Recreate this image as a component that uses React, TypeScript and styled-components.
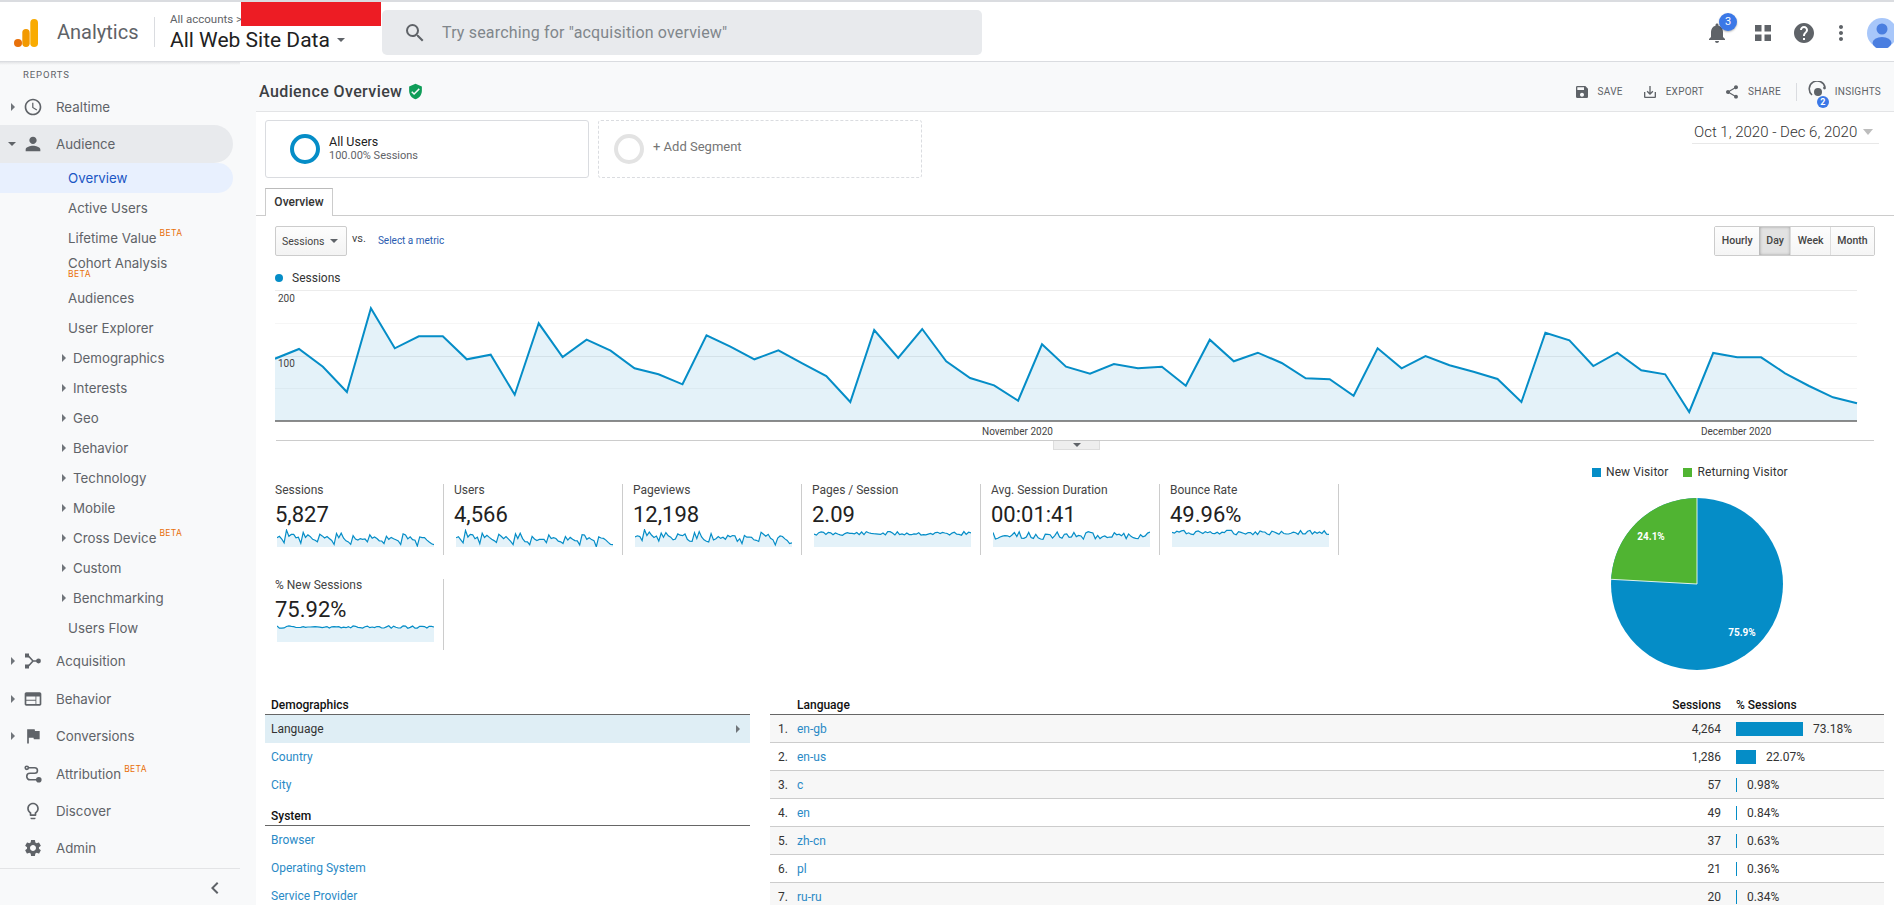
import { FC, ReactNode } from 'react';
import styled, { createGlobalStyle } from 'styled-components';
import {
  MdChevronLeft,
  MdFlag,
  MdHelp,
  MdMoreVert,
  MdNotifications,
  MdOutlineLightbulb,
  MdOutlineSaveAlt,
  MdOutlineWatchLater,
  MdPerson,
  MdSave,
  MdSearch,
  MdSettings,
  MdShare,
  MdVerifiedUser,
  MdWeb,
} from 'react-icons/md';

const BLUE = '#058dc7';
const GREEN = '#50b432';

// y of each day on the big chart, measured in px from the top of the chart svg
const SESSIONS = [
  296, 267, 320, 396, 145, 265, 229, 229, 298, 284, 404, 190, 291, 239, 272, 325, 343, 373, 226, 260,
  298, 271, 310, 348, 426, 210, 294, 207, 304, 354, 376, 422, 253, 320, 341, 312, 325, 320, 377, 239,
  304, 278, 309, 355, 358, 407, 265, 325, 288, 316, 335, 357, 426, 218, 241, 318, 278, 331, 343, 456,
  279, 292, 292, 340, 378, 412, 430,
].map((z) => z / 3 - 30);

const noise = (seed: number, count: number, level: number, spread: number) => {
  const out: number[] = [];
  let s = seed;
  for (let i = 0; i < count; i++) {
    s = (s * 9301 + 49297) % 233280;
    out.push(level + (s / 233280 - 0.5) * spread);
  }
  return out;
};

const sessionsSpark = SESSIONS.map((y) => ((y - 18) / 104) * 16 + 1);
const usersSpark = sessionsSpark.map((y, i) => y + (i % 3) * 0.4);
const pageviewsSpark = sessionsSpark.map((y, i) => y * 0.9 + noise(7, 67, 0, 4)[i]);

const METRICS = [
  { label: 'Sessions', value: '5,827', spark: sessionsSpark },
  { label: 'Users', value: '4,566', spark: usersSpark },
  { label: 'Pageviews', value: '12,198', spark: pageviewsSpark },
  { label: 'Pages / Session', value: '2.09', spark: noise(11, 67, 4.5, 4) },
  { label: 'Avg. Session Duration', value: '00:01:41', spark: noise(23, 67, 6.5, 8) },
  { label: 'Bounce Rate', value: '49.96%', spark: noise(31, 67, 3.5, 4.5) },
  { label: '% New Sessions', value: '75.92%', spark: noise(47, 67, 3, 2.5) },
];

const LANGUAGES = [
  { name: 'en-gb', sessions: '4,264', pct: '73.18%', bar: 67 },
  { name: 'en-us', sessions: '1,286', pct: '22.07%', bar: 20 },
  { name: 'c', sessions: '57', pct: '0.98%', bar: 1 },
  { name: 'en', sessions: '49', pct: '0.84%', bar: 1 },
  { name: 'zh-cn', sessions: '37', pct: '0.63%', bar: 1 },
  { name: 'pl', sessions: '21', pct: '0.36%', bar: 1 },
  { name: 'ru-ru', sessions: '20', pct: '0.34%', bar: 1 },
];

const Logo = () => (
  <svg width="24" height="28" viewBox="0 0 24 28">
    <circle cx="4" cy="24" r="4" fill="#e8710a" />
    <rect x="8.3" y="10" width="7.4" height="18" rx="3.7" fill="#f29900" />
    <rect x="16.3" y="0" width="7.7" height="28" rx="3.8" fill="#f9ab00" />
  </svg>
);

const AcquisitionIcon = () => (
  <svg width="20" height="20" viewBox="0 0 20 20" fill="#5f6368">
    <rect x="2" y="2.5" width="4" height="4" />
    <rect x="2" y="13.5" width="4" height="4" />
    <circle cx="15.5" cy="10" r="2.4" />
    <path d="M5 4.5 10 10l-5 5.5M10 10h5" fill="none" stroke="#5f6368" strokeWidth="1.6" />
  </svg>
);

const AttributionIcon = () => (
  <svg width="20" height="20" viewBox="0 0 20 20" fill="none" stroke="#5f6368" strokeWidth="1.6">
    <circle cx="3.8" cy="3.8" r="1.6" />
    <circle cx="15.8" cy="15.8" fill="#5f6368" r="2" />
    <path d="M5.5 3.8h6.2a2.7 2.7 0 0 1 0 5.5H7a3 3 0 0 0 0 6.5h7" />
  </svg>
);

const InsightsIcon = () => (
  <svg width="22" height="22" viewBox="0 0 22 22">
    <path d="M4 14a8 8 0 1 1 13-8" fill="none" stroke="#5f6368" strokeWidth="1.6" />
    <circle cx="10" cy="11" r="4" fill="#5f6368" />
    <circle cx="16.5" cy="7" r="1.4" fill="#5f6368" />
  </svg>
);

const GridIcon = () => (
  <svg width="16" height="16" viewBox="0 0 16 16" fill="#5f6368">
    <rect width="6.5" height="6.5" />
    <rect x="9.5" width="6.5" height="6.5" />
    <rect y="9.5" width="6.5" height="6.5" />
    <rect x="9.5" y="9.5" width="6.5" height="6.5" />
  </svg>
);

const AvatarIcon = () => (
  <svg width="30" height="30" viewBox="0 0 30 30">
    <circle cx="15" cy="15" r="15" fill="#a8c7fa" />
    <circle cx="15" cy="11" r="5.5" fill="#4a7ee0" />
    <ellipse cx="15" cy="25" rx="9.5" ry="6" fill="#4a7ee0" />
  </svg>
);

const SessionsChart: FC = () => {
  const step = 1582 / 66;
  const points = SESSIONS.map((y, i) => `${(i * step).toFixed(1)},${y.toFixed(1)}`).join(' ');
  return (
    <svg width="1600" height="150" viewBox="0 0 1600 150">
      {[0, 33, 66, 98].map((y) => (
        <line key={y} x1="0" x2="1582" y1={y + 0.5} y2={y + 0.5} stroke={y % 66 === 0 ? '#ececec' : '#f6f6f6'} />
      ))}
      <polygon points={`0,131 ${points} 1582,131`} fill={BLUE} fillOpacity="0.11" />
      <polyline points={points} fill="none" stroke={BLUE} strokeWidth="2" />
      <line x1="0" x2="1582" y1="131" y2="131" stroke="#666" strokeWidth="1.6" />
      <AxisText x="3" y="12">200</AxisText>
      <AxisText x="3" y="77">100</AxisText>
      <AxisText x="707" y="145">November 2020</AxisText>
      <AxisText x="1426" y="145">December 2020</AxisText>
    </svg>
  );
};

const Sparkline: FC<{ values: number[]; height?: number }> = ({ values, height = 18 }) => {
  const step = 157 / (values.length - 1);
  const points = values.map((y, i) => `${(i * step).toFixed(1)},${y.toFixed(1)}`).join(' ');
  return (
    <SparkSvg width="157" height={height} viewBox={`0 0 157 ${height}`}>
      <polygon points={`0,${height} ${points} 157,${height}`} fill={BLUE} fillOpacity="0.11" />
      <polyline points={points} fill="none" stroke={BLUE} strokeWidth="1.2" />
    </SparkSvg>
  );
};

const Pie = () => (
  <svg width="174" height="174" viewBox="-87 -87 174 174">
    <circle r="86" fill={BLUE} />
    <path d="M0 0 L-85.87 -4.7 A86 86 0 0 1 0 -86 Z" fill={GREEN} />
    <path d="M0 -86 L0 0 L-85.87 -4.7" fill="none" stroke="#fff" strokeWidth="1" opacity="0.85" />
    <PieLabel x="-46" y="-44.5">24.1%</PieLabel>
    <PieLabel x="45" y="51.5">75.9%</PieLabel>
  </svg>
);

const TopNav: FC<{ icon: ReactNode; caret?: 'right' | 'down'; active?: boolean; children: ReactNode }> = ({
  icon,
  caret,
  active,
  children,
}) => (
  <NavTop $active={active}>
    <CaretSlot>{caret && <Caret $dir={caret} />}</CaretSlot>
    <NavIcon>{icon}</NavIcon>
    <span>{children}</span>
  </NavTop>
);

const SubNav: FC<{ caret?: boolean; children: ReactNode }> = ({ caret, children }) => (
  <NavSub $caret={caret}>
    {caret && <Caret $dir="right" />}
    <span>{children}</span>
  </NavSub>
);

export default function App() {
  return (
    <>
      <GlobalStyle />
      <Page>
        <Header>
          <LogoSlot>
            <Logo />
          </LogoSlot>
          <Brand>Analytics</Brand>
          <Account>
            <AccountTop>All accounts &gt;</AccountTop>
            <AccountName>
              All Web Site Data <SmallCaret />
            </AccountName>
            <Redaction />
          </Account>
          <SearchBox>
            <MdSearch size={24} color="#5f6368" />
            <span>Try searching for "acquisition overview"</span>
          </SearchBox>
          <HeaderIcons>
            <BellButton>
              <MdNotifications size={24} color="#5f6368" />
              <BellBadge>3</BellBadge>
            </BellButton>
            <GridIcon />
            <HelpSlot>
              <MdHelp size={24} color="#5f6368" />
            </HelpSlot>
            <MoreSlot>
              <MdMoreVert size={24} color="#5f6368" />
            </MoreSlot>
            <AvatarIcon />
          </HeaderIcons>
        </Header>
        <Body>
          <Sidebar>
            <ReportsLabel>REPORTS</ReportsLabel>
            <TopNav caret="right" icon={<MdOutlineWatchLater size={20} />}>Realtime</TopNav>
            <TopNav caret="down" active icon={<MdPerson size={22} />}>Audience</TopNav>
            <NavCurrent>Overview</NavCurrent>
            <SubNav>Active Users</SubNav>
            <SubNav>Lifetime Value<Beta>BETA</Beta></SubNav>
            <NavStacked>
              Cohort Analysis
              <BetaBelow>BETA</BetaBelow>
            </NavStacked>
            <SubNav>Audiences</SubNav>
            <SubNav>User Explorer</SubNav>
            <SubNav caret>Demographics</SubNav>
            <SubNav caret>Interests</SubNav>
            <SubNav caret>Geo</SubNav>
            <SubNav caret>Behavior</SubNav>
            <SubNav caret>Technology</SubNav>
            <SubNav caret>Mobile</SubNav>
            <SubNav caret>Cross Device<Beta>BETA</Beta></SubNav>
            <SubNav caret>Custom</SubNav>
            <SubNav caret>Benchmarking</SubNav>
            <SubNav>Users Flow</SubNav>
            <TopNav caret="right" icon={<AcquisitionIcon />}>Acquisition</TopNav>
            <TopNav caret="right" icon={<MdWeb size={20} />}>Behavior</TopNav>
            <TopNav caret="right" icon={<MdFlag size={20} />}>Conversions</TopNav>
            <TopNav icon={<AttributionIcon />}>Attribution<Beta>BETA</Beta></TopNav>
            <TopNav icon={<MdOutlineLightbulb size={20} />}>Discover</TopNav>
            <TopNav icon={<MdSettings size={20} />}>Admin</TopNav>
            <SidebarFoot>
              <MdChevronLeft size={24} color="#5f6368" />
            </SidebarFoot>
          </Sidebar>

          <Main>
            <TitleBar>
              <Title>Audience Overview</Title>
              <MdVerifiedUser size={17} color="#0f9d58" />
              <Actions>
                <Action $after={19}><MdSave size={16} />SAVE</Action>
                <Action $after={20}><MdOutlineSaveAlt size={16} />EXPORT</Action>
                <Action $after={15}><MdShare size={16} />SHARE</Action>
                <InsightsAction>
                  <InsightsBadgeWrap>
                    <InsightsIcon />
                    <InsightsBadge>2</InsightsBadge>
                  </InsightsBadgeWrap>
                  INSIGHTS
                </InsightsAction>
              </Actions>
            </TitleBar>

            <SegmentRow>
              <SegmentCard>
                <SegmentRing />
                <div>
                  <SegmentName>All Users</SegmentName>
                  <SegmentSub>100.00% Sessions</SegmentSub>
                </div>
              </SegmentCard>
              <AddSegmentCard>
                <SegmentRing $empty />
                <AddSegmentText>+ Add Segment</AddSegmentText>
              </AddSegmentCard>
              <DateRange>
                Oct 1, 2020 - Dec 6, 2020 <GreyCaret />
              </DateRange>
            </SegmentRow>

            <TabStrip>
              <Tab>Overview</Tab>
            </TabStrip>

            <ChartToolbar>
              <MetricSelect>
                Sessions <SmallCaret />
              </MetricSelect>
              <VsLabel>vs.</VsLabel>
              <SelectMetric>Select a metric</SelectMetric>
              <Granularity>
                <GranButton>Hourly</GranButton>
                <GranButton $on>Day</GranButton>
                <GranButton>Week</GranButton>
                <GranButton>Month</GranButton>
              </Granularity>
            </ChartToolbar>

            <ChartLegend>
              <LegendDot />
              Sessions
            </ChartLegend>
            <ChartWrap>
              <SessionsChart />
            </ChartWrap>
            <ChartFoot>
              <ChartHandle>
                <SmallCaret />
              </ChartHandle>
            </ChartFoot>

            <StatsSection>
              <Scorecards>
                {METRICS.map((m) => (
                  <Scorecard key={m.label}>
                    <ScoreLabel>{m.label}</ScoreLabel>
                    <ScoreValue>{m.value}</ScoreValue>
                    <Sparkline values={m.spark} />
                  </Scorecard>
                ))}
              </Scorecards>
              <PieColumn>
                <PieLegend>
                  <PieKey><Swatch $color={BLUE} />New Visitor</PieKey>
                  <PieKey><Swatch $color={GREEN} />Returning Visitor</PieKey>
                </PieLegend>
                <PieSlot>
                  <Pie />
                </PieSlot>
              </PieColumn>
            </StatsSection>

            <TablesSection>
              <SideMenu>
                <MenuHeading>Demographics</MenuHeading>
                <MenuItem $on>
                  Language
                  <Caret $dir="right" />
                </MenuItem>
                <MenuItem>Country</MenuItem>
                <MenuItem>City</MenuItem>
                <MenuHeading $spaced>System</MenuHeading>
                <MenuItem>Browser</MenuItem>
                <MenuItem>Operating System</MenuItem>
                <MenuItem>Service Provider</MenuItem>
              </SideMenu>
              <LangTable>
                <LangHead>
                  <span />
                  <span>Language</span>
                  <SessionsCell>Sessions</SessionsCell>
                  <span>% Sessions</span>
                </LangHead>
                {LANGUAGES.map((row, i) => (
                  <LangRow key={row.name} $odd={i % 2 === 0}>
                    <NumCell>{i + 1}.</NumCell>
                    <LangLink>{row.name}</LangLink>
                    <SessionsCell>{row.sessions}</SessionsCell>
                    <PctCell>
                      <PctBar style={{ width: row.bar }} />
                      {row.pct}
                    </PctCell>
                  </LangRow>
                ))}
              </LangTable>
            </TablesSection>
          </Main>
        </Body>
      </Page>
    </>
  );
}

const GlobalStyle = createGlobalStyle`
  html, body {
    margin: 0;
    padding: 0;
    height: 100%;
    overflow: hidden;
    background: #fff;
    font-family: Roboto, 'Liberation Sans', sans-serif;
    font-size: 12px;
    color: #212121;
  }
`;

const Page = styled.div`
  display: flex;
  flex-direction: column;
  height: 100vh;
  overflow: hidden;
  border-top: 2px solid #dadce0;
  box-sizing: border-box;
`;

const Header = styled.header`
  display: flex;
  align-items: center;
  flex: none;
  height: 59px;
  border-bottom: 1px solid #dadce0;
  background: #fff;
`;

const LogoSlot = styled.div`
  display: flex;
  margin-left: 14px;
  margin-top: 2px;
`;

const Brand = styled.div`
  margin-left: 19px;
  padding-right: 16px;
  height: 30px;
  line-height: 30px;
  width: 81px;
  font-size: 20px;
  color: #5f6368;
  border-right: 1px solid #dadce0;
  box-sizing: content-box;
`;

const Account = styled.div`
  position: relative;
  margin-left: 15px;
  margin-top: 2px;
  width: 212px;
  flex: none;
`;

const AccountTop = styled.div`
  font-size: 11.5px;
  line-height: 14px;
  color: #5f6368;
`;

const AccountName = styled.div`
  font-size: 21px;
  line-height: 28px;
  color: #212121;
  display: flex;
  align-items: center;
  gap: 7px;
  white-space: nowrap;
`;

const Redaction = styled.div`
  position: absolute;
  left: 71px;
  top: -12px;
  width: 140px;
  height: 26px;
  background: #ed1c24;
`;

const SearchBox = styled.div`
  display: flex;
  align-items: center;
  gap: 15px;
  box-sizing: border-box;
  width: 600px;
  height: 45px;
  padding-left: 21px;
  margin-top: 2px;
  border-radius: 5px;
  background: #e8eaed;
  font-size: 16px;
  letter-spacing: 0.17px;
  color: #80868b;
`;

const HeaderIcons = styled.div`
  display: flex;
  align-items: center;
  margin-left: auto;
  margin-right: -3px;
  margin-top: 2px;
`;

const BellButton = styled.div`
  position: relative;
  display: flex;
  margin-right: 26px;
`;

const BellBadge = styled.span`
  position: absolute;
  top: -8px;
  right: -8px;
  width: 18px;
  height: 18px;
  border-radius: 50%;
  background: #3b78e7;
  color: #fff;
  font-size: 11px;
  line-height: 18px;
  text-align: center;
  box-shadow: 0 1px 2px rgba(0, 0, 0, 0.3);
`;

const HelpSlot = styled.div`
  display: flex;
  margin-left: 21px;
`;

const MoreSlot = styled.div`
  display: flex;
  margin-left: 13px;
  margin-right: 14px;
`;

const Body = styled.div`
  display: flex;
  flex: 1;
  min-height: 0;
`;

const Sidebar = styled.nav`
  flex: none;
  width: 256px;
  background: #f8f9fa linear-gradient(#e3e4e6, #f8f9fa) no-repeat 0 0 / 240px 3px;
  font-family: Inter, Roboto, sans-serif;
  font-size: 13.3px;
  color: #5f6368;
`;

const ReportsLabel = styled.div`
  height: 26px;
  padding-left: 23px;
  font-size: 9.5px;
  line-height: 25px;
  letter-spacing: 0.9px;
  font-family: Roboto, sans-serif;
`;

const NavTop = styled.div<{ $active?: boolean }>`
  display: flex;
  align-items: center;
  box-sizing: border-box;
  width: 233px;
  height: 37.4px;
  padding-left: 11px;
  border-radius: 0 19px 19px 0;
  background: ${(p) => (p.$active ? '#e8eaed' : 'transparent')};
`;

const CaretSlot = styled.span`
  display: flex;
  flex: none;
  width: 11px;
`;

const NavIcon = styled.span`
  display: flex;
  flex: none;
  align-items: center;
  justify-content: center;
  width: 22px;
  margin-right: 12px;
  color: #5f6368;
`;

const Caret = styled.i<{ $dir: 'right' | 'down' }>`
  display: block;
  flex: none;
  width: 0;
  height: 0;
  border-style: solid;
  border-color: transparent;
  ${(p) =>
    p.$dir === 'right'
      ? 'border-width: 4px 0 4px 4px; border-left-color: #70757a;'
      : 'border-width: 4px 4px 0 4px; border-top-color: #5f6368; margin-left: -3px;'}
`;

const NavSub = styled.div<{ $caret?: boolean }>`
  display: flex;
  align-items: center;
  gap: 7px;
  height: 30px;
  padding-left: ${(p) => (p.$caret ? '62px' : '68px')};
`;

const NavCurrent = styled.div`
  box-sizing: border-box;
  width: 233px;
  height: 30px;
  line-height: 30px;
  padding-left: 68px;
  border-radius: 0 15px 15px 0;
  background: #e8f0fe;
  color: #1a56c4;
`;

const NavStacked = styled.div`
  box-sizing: border-box;
  height: 30px;
  padding: 2px 0 0 68px;
  line-height: 16px;
`;

const Beta = styled.sup`
  margin-left: 3px;
  position: relative;
  top: -7px;
  font-size: 8.5px;
  line-height: 0;
  vertical-align: baseline;
  letter-spacing: 0.4px;
  color: #e8710a;
`;

const BetaBelow = styled.div`
  font-size: 8.5px;
  line-height: 8px;
  margin-top: -1px;
  letter-spacing: 0.4px;
  color: #e8710a;
`;

const SidebarFoot = styled.div`
  display: flex;
  justify-content: flex-end;
  box-sizing: border-box;
  width: 240px;
  height: 36px;
  margin-top: 1px;
  padding: 7px 13px 0 0;
  border-top: 1px solid #e3e4e6;
`;

const Main = styled.main`
  flex: 1;
  min-width: 0;
  display: flex;
  flex-direction: column;
`;

const TitleBar = styled.div`
  display: flex;
  align-items: center;
  flex: none;
  box-sizing: content-box;
  gap: 5px;
  height: 39px;
  padding: 10px 13px 0 3px;
  background: #f8f9fa;
  border-bottom: 1px solid #e3e4e6;
`;

const Title = styled.h1`
  margin: 0;
  font-size: 16px;
  font-weight: 500;
  letter-spacing: 0.4px;
  color: #3c4043;
`;

const Actions = styled.div`
  display: flex;
  align-items: center;
  margin-left: auto;
`;

const Action = styled.div<{ $after?: number }>`
  display: flex;
  align-items: center;
  gap: 8px;
  margin-right: ${(p) => p.$after ?? 0}px;
  font-size: 10px;
  letter-spacing: 0.25px;
  color: #5f6368;
`;

const InsightsAction = styled(Action)`
  height: 18px;
  gap: 5px;
  padding-left: 11px;
  border-left: 1px solid #dadce0;
`;

const InsightsBadgeWrap = styled.span`
  position: relative;
  display: flex;
`;

const InsightsBadge = styled.span`
  position: absolute;
  left: 9px;
  bottom: -5px;
  width: 12px;
  height: 12px;
  border-radius: 50%;
  background: #3b78e7;
  color: #fff;
  font-size: 9px;
  line-height: 12px;
  text-align: center;
  font-weight: 700;
  letter-spacing: 0;
`;

const SegmentRow = styled.div`
  display: flex;
  flex: none;
  height: 76px;
  padding: 8px 15px 0 9px;
  gap: 9px;
  box-sizing: border-box;
`;

const SegmentCard = styled.div`
  display: flex;
  align-items: center;
  box-sizing: border-box;
  width: 324px;
  height: 58px;
  padding-left: 24px;
  gap: 9px;
  border: 1px solid #dadce0;
  border-radius: 3px;
`;

const AddSegmentCard = styled(SegmentCard)`
  padding-left: 15px;
  border: 1px dashed #dadce0;
`;

const SegmentRing = styled.span<{ $empty?: boolean }>`
  display: block;
  box-sizing: border-box;
  width: 30px;
  height: 30px;
  border-radius: 50%;
  border: 4px solid ${(p) => (p.$empty ? '#e3e3e3' : BLUE)};
`;

const SegmentName = styled.div`
  margin-top: -1px;
  font-size: 12.5px;
  line-height: 15px;
  color: #212121;
`;

const SegmentSub = styled.div`
  font-size: 11px;
  line-height: 14px;
  color: #5f6368;
`;

const AddSegmentText = styled.span`
  margin-top: -5px;
  font-size: 13px;
  color: #757575;
`;

const DateRange = styled.div`
  display: flex;
  align-items: center;
  box-sizing: border-box;
  height: 24px;
  gap: 6px;
  margin-left: auto;
  padding: 0 0 0 2px;
  font-size: 15px;
  font-weight: 300;
  color: #333;
  border-bottom: 1px solid #e8e8e8;
  width: 187px;
  white-space: nowrap;
`;

const GreyCaret = styled.i`
  display: block;
  width: 0;
  height: 0;
  border-style: solid;
  border-width: 6px 5.5px 0;
  border-color: #bdbdbd transparent transparent;
`;

const SmallCaret = styled.i`
  display: inline-block;
  width: 0;
  height: 0;
  border-style: solid;
  border-width: 4px 4px 0;
  border-color: #5f6368 transparent transparent;
`;

const TabStrip = styled.div`
  flex: none;
  height: 27px;
  padding-left: 9px;
  border-bottom: 1px solid #ccc;
`;

const Tab = styled.div`
  box-sizing: border-box;
  width: 68px;
  height: 28px;
  line-height: 27px;
  text-align: center;
  font-size: 12px;
  font-weight: 500;
  color: #333;
  background: #fff;
  border: 1px solid #ccc;
  border-bottom: none;
  border-top-color: #bbb;
`;

const ChartToolbar = styled.div`
  display: flex;
  align-items: flex-start;
  flex: none;
  height: 29px;
  margin-top: 10px;
  padding: 0 19px;
`;

const MetricSelect = styled.div`
  display: flex;
  align-items: center;
  box-sizing: border-box;
  justify-content: space-between;
  width: 72px;
  height: 30px;
  padding: 0 8px 0 6px;
  font-size: 10.5px;
  color: #444;
  border: 1px solid #ccc;
  border-radius: 2px;
  background: linear-gradient(#fdfdfd, #f3f3f3);
`;

const VsLabel = styled.span`
  margin-left: 5px;
  margin-top: 6px;
  font-size: 11px;
  color: #444;
`;

const SelectMetric = styled.span`
  margin-left: 12px;
  margin-top: 9px;
  font-size: 10px;
  color: #2a5db0;
`;

const Granularity = styled.div`
  display: flex;
  height: 30px;
  margin-left: auto;
  box-sizing: border-box;
  border: 1px solid #ccc;
  border-radius: 2px;
`;

const GranButton = styled.div<{ $on?: boolean }>`
  padding: 0 6.4px;
  line-height: 28px;
  font-size: 10.5px;
  font-weight: 500;
  color: #444;
  background: ${(p) => (p.$on ? '#e2e2e2' : 'linear-gradient(#fdfdfd, #f5f5f5)')};
  border-left: 1px solid ${(p) => (p.$on ? '#bbb' : '#ddd')};
  box-shadow: ${(p) => (p.$on ? 'inset 0 0 3px rgba(0,0,0,.3)' : 'none')};
  &:first-child {
    border-left: none;
  }
`;

const ChartLegend = styled.div`
  display: flex;
  align-items: center;
  flex: none;
  gap: 9px;
  height: 16px;
  margin-top: 15px;
  padding-left: 19px;
  font-size: 12px;
  color: #333;
`;

const LegendDot = styled.span`
  width: 8px;
  height: 8px;
  border-radius: 50%;
  background: ${BLUE};
`;

const ChartWrap = styled.div`
  display: flex;
  flex: none;
  height: 150px;
  margin-top: 4px;
  padding-left: 19px;
`;

const AxisText = styled.text`
  font-size: 10px;
  fill: #444;
  font-family: Roboto, sans-serif;
`;

const ChartFoot = styled.div`
  position: relative;
  flex: none;
  height: 9px;
  margin: 0 20px 0 20px;
  border-top: 1px solid #ccc;
`;

const ChartHandle = styled.div`
  position: absolute;
  left: 777px;
  top: 0;
  display: flex;
  justify-content: center;
  align-items: center;
  width: 45px;
  height: 8px;
  background: #eee;
  border: 1px solid #ddd;
  border-top: none;
`;

const StatsSection = styled.section`
  display: flex;
  flex: none;
  height: 247px;
`;

const Scorecards = styled.div`
  display: grid;
  grid-template-columns: repeat(6, 179px);
  grid-auto-rows: 71px;
  row-gap: 24px;
  margin: 34px 0 0 9px;
`;

const Scorecard = styled.div`
  box-sizing: border-box;
  padding-left: 10px;
  border-right: 1px solid #ccc;
  overflow: hidden;
`;

const ScoreLabel = styled.div`
  margin-top: -1px;
  font-size: 12px;
  line-height: 14px;
  color: #444;
`;

const ScoreValue = styled.div`
  margin-top: 6px;
  font-size: 22px;
  line-height: 24px;
  color: #212121;
`;

const SparkSvg = styled.svg`
  display: block;
  margin: 2px 0 0 2px;
`;

const PieColumn = styled.div`
  margin: 13px 0 0 auto;
  width: 302px;
`;

const PieLegend = styled.div`
  display: flex;
  gap: 15px;
  height: 18px;
`;

const PieKey = styled.div`
  display: flex;
  align-items: center;
  gap: 5px;
  font-size: 12px;
  letter-spacing: 0.1px;
  color: #333;
`;

const Swatch = styled.span<{ $color: string }>`
  width: 9px;
  height: 9px;
  background: ${(p) => p.$color};
`;

const PieSlot = styled.div`
  margin: 16px 0 0 18px;
`;

const PieLabel = styled.text`
  font-size: 10px;
  font-weight: 700;
  fill: #fff;
  text-anchor: middle;
  font-family: Roboto, sans-serif;
`;

const TablesSection = styled.section`
  display: flex;
  flex: none;
  gap: 20px;
  padding: 0 10px 0 9px;
`;

const SideMenu = styled.div`
  flex: none;
  width: 485px;
`;

const MenuHeading = styled.div<{ $spaced?: boolean }>`
  box-sizing: border-box;
  height: ${(p) => (p.$spaced ? '27px' : '18px')};
  padding: ${(p) => (p.$spaced ? '10px' : '1px')} 0 0 6px;
  line-height: 14px;
  font-size: 12px;
  font-weight: 500;
  color: #111;
  border-bottom: 1px solid #666;
`;

const MenuItem = styled.div<{ $on?: boolean }>`
  display: flex;
  align-items: center;
  justify-content: space-between;
  height: 28px;
  padding: 0 10px 0 6px;
  font-size: 12px;
  color: ${(p) => (p.$on ? '#333' : '#2a8ac6')};
  background: ${(p) => (p.$on ? '#dfeef5' : 'transparent')};
`;

const LangTable = styled.div`
  flex: 1;
  min-width: 0;
`;

const langColumns = '27px 1fr 94px 148px';

const LangHead = styled.div`
  display: grid;
  grid-template-columns: ${langColumns};
  box-sizing: border-box;
  height: 18px;
  padding-top: 1px;
  line-height: 14px;
  font-size: 12px;
  font-weight: 500;
  color: #111;
  border-bottom: 1px solid #666;
`;

const LangRow = styled.div<{ $odd?: boolean }>`
  display: grid;
  grid-template-columns: ${langColumns};
  align-items: center;
  box-sizing: border-box;
  height: 28px;
  font-size: 12px;
  color: #333;
  background: ${(p) => (p.$odd ? '#f7f7f7' : '#fff')};
  border-bottom: 1px solid #ccc;
`;

const NumCell = styled.span`
  padding-left: 8px;
`;

const LangLink = styled.span`
  color: #2a8ac6;
`;

const SessionsCell = styled.span`
  padding-right: 15px;
  text-align: right;
`;

const PctCell = styled.span`
  display: flex;
  align-items: center;
  gap: 10px;
`;

const PctBar = styled.span`
  height: 14px;
  background: ${BLUE};
`;
